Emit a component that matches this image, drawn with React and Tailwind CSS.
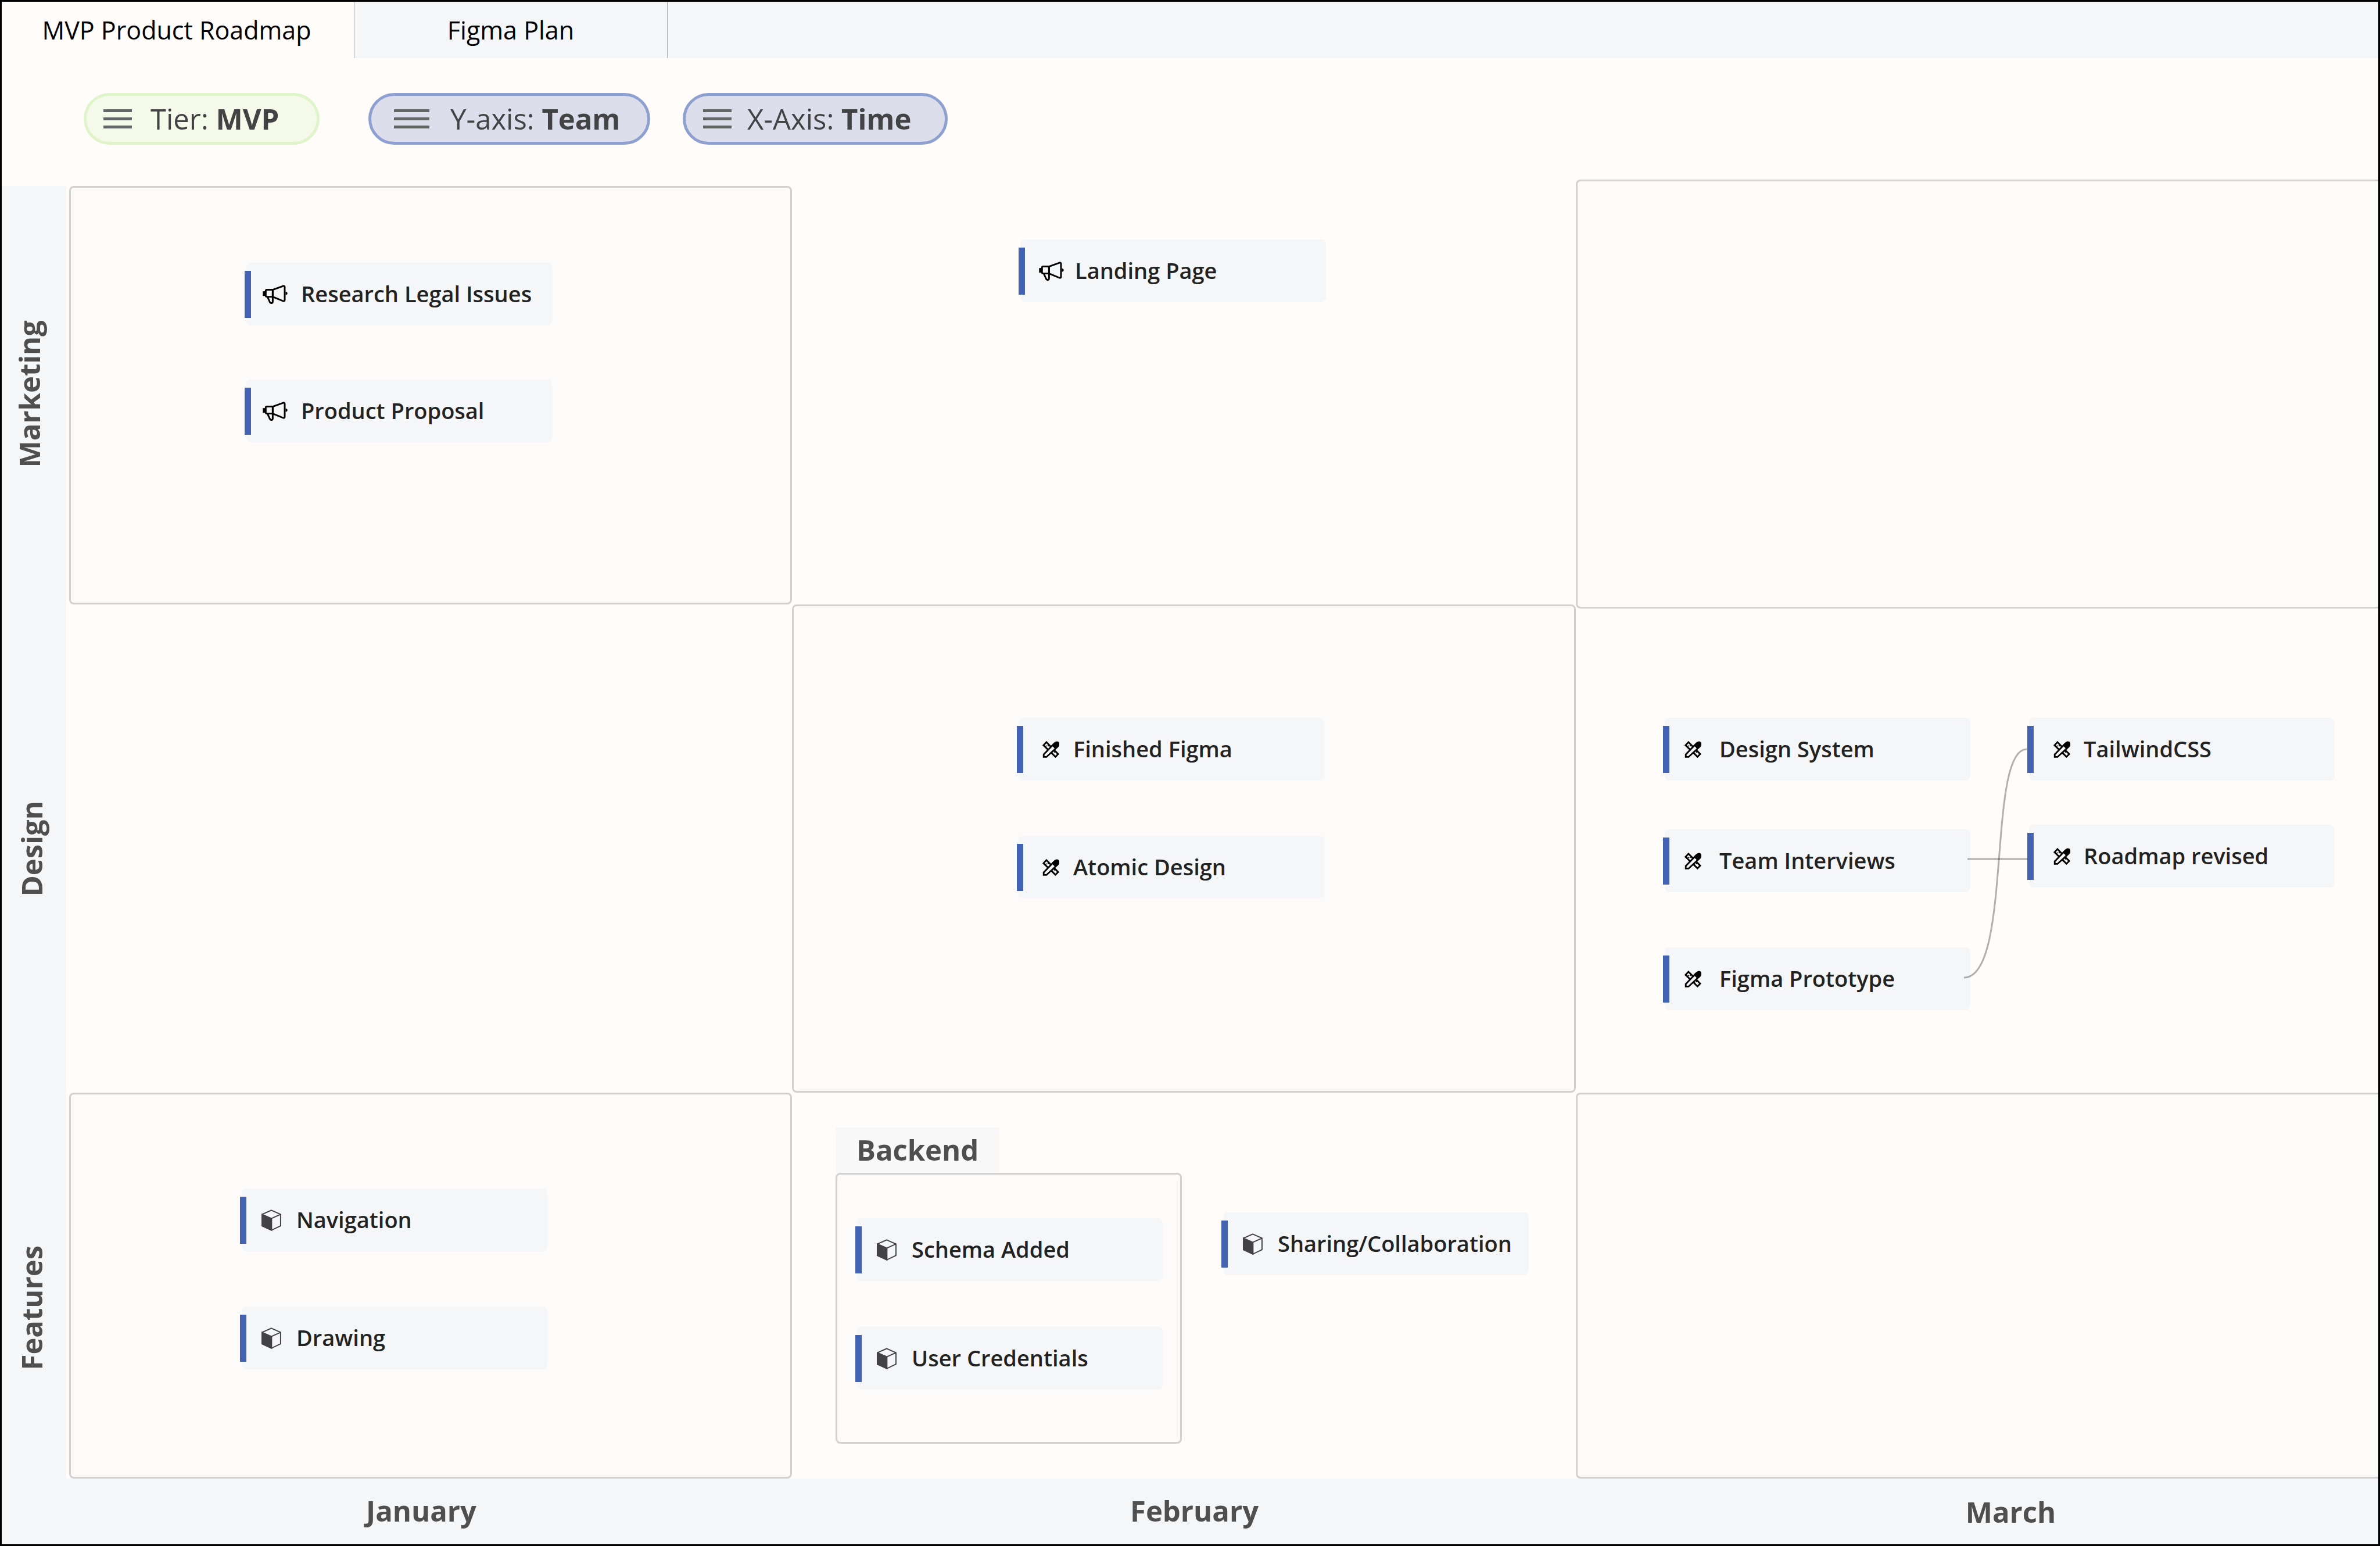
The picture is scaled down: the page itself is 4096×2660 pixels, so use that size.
import React from "react";

function MegaphoneIcon() {
  return (
    <svg viewBox="180 193 144 112" className="h-[33px] w-[43px] shrink-0" fill="none" stroke="#000" strokeWidth="10" strokeLinejoin="round" aria-hidden="true">
      <path d="M180 231h13v27h-13z" fill="#000" stroke="none" />
      <path d="M238 222h-34q-7 0-7 7v27q0 7 7 7h34z" />
      <path d="M238 222l61-22q9-2 9 6v75q0 9-9 7l-61-25z" />
      <path d="M208 265l13 29q3 6 9 6 8 0 8-9v-28" />
      <path d="M313 233q11 2 11 10t-11 10z" fill="#000" stroke="none" />
    </svg>
  );
}

function DesignIcon() {
  return (
    <svg viewBox="66 47 92 92" className="h-[29px] w-[29px] shrink-0" fill="#f5f6f8" stroke="#000" strokeWidth="9" aria-hidden="true">
      <path d="M88 53L152 118L137 133L72 70Z" />
      <path d="M103 67l-8 8M89 72l-4 4M137 101l-8 8M124 112l-4 4" strokeWidth="6" />
      <path d="M73 134v-14L130 61q9-9 18 0t0 18L88 134z" />
      <path d="M116 71l20 20 19-18q8-11-1-21-10-8-20 1z" fill="#000" stroke="none" />
      <path d="M82 127L127 82" stroke="#f5f6f8" strokeWidth="8" />
    </svg>
  );
}

function CubeIcon() {
  return (
    <svg viewBox="0 0 38 41" className="h-[37px] w-[34px] shrink-0" fill="none" stroke="#424244" strokeWidth="2.2" aria-hidden="true">
      <path d="M19 1.3L36.8 9.2V31.3L19 39.8L1.2 31.3V9.2Z" />
      <path d="M1.2 9.2L19.4 17.2V39.6L1.2 31.3Z" fill="#424244" />
      <path d="M19.4 17L36.8 9.2" />
    </svg>
  );
}

const ICONS = { megaphone: MegaphoneIcon, design: DesignIcon, cube: CubeIcon };

function Card({ icon, inset, className = "", children }) {
  const Icon = ICONS[icon];
  return (
    <article className={`relative flex h-[108px] w-[526px] shrink-0 items-center rounded-lg bg-[#f5f6f8] ${className}`}>
      <span className="absolute top-[14px] -left-[3px] h-[81px] w-[11px] bg-[#4462b2]" />
      <span className={`w-[94px] shrink-0 ${inset}`}>
        <Icon />
      </span>
      <h3 className="pb-0.5 text-[38px] leading-[52px] font-semibold whitespace-nowrap text-[#222]">{children}</h3>
    </article>
  );
}

function Pill({ label, value, className, burger = "w-[49px]" }) {
  return (
    <button type="button" className={`flex h-[89px] items-center rounded-full border-[5px] text-[49px] leading-[66px] whitespace-nowrap text-[#434345] ${className}`}>
      <span className={`flex shrink-0 flex-col gap-[9px] ${burger}`}>
        <span className="h-[5px] bg-[#646567]" />
        <span className="h-[5px] bg-[#646567]" />
        <span className="h-[5px] bg-[#646567]" />
      </span>
      <span>
        {label} <strong className="font-bold">{value}</strong>
      </span>
    </button>
  );
}

function Cell({ outlined, className = "", children }) {
  return (
    <section className={`border-[3px] ${outlined ? "rounded-lg border-[#d2d1cf] bg-[#fcfbf9]" : "border-transparent"} ${className}`}>
      {children}
    </section>
  );
}

function RowLabel({ className = "pr-2.5", children }) {
  return (
    <div className={`mr-[5px] flex items-center justify-center bg-[#f5f6f8] ${className}`}>
      <h2 className="rotate-180 text-[49px] leading-[66px] font-bold text-[#4f4f4f] [writing-mode:vertical-rl]">{children}</h2>
    </div>
  );
}

export default function App() {
  return (
    <div className="flex min-h-screen flex-col border-[3px] border-black bg-[#fffcf9] font-['Open_Sans',sans-serif]">
      <nav className="flex h-[97px] bg-[#f5f6f8] text-[43px] leading-[60px] text-black">
        <button type="button" className="w-[606px] bg-[#fffcf9] pr-1">MVP Product Roadmap</button>
        <button type="button" className="w-[540px] border-x border-[#a9aaac]">Figma Plan</button>
      </nav>

      <div className="flex h-[220px] items-center pb-[12px] pl-[141px]">
        <Pill label="Tier:" value="MVP" className="mr-[84px] min-w-[406px] gap-[32px] border-[#dff4ca] bg-[#f5f9e9] pl-[29px]" />
        <Pill label="Y-axis:" value="Team" burger="w-[61px]" className="mr-[56px] min-w-[485px] gap-[36px] border-[#8da0d0] bg-[#dddeeb] pl-[39px]" />
        <Pill label="X-Axis:" value="Time" className="min-w-[456px] gap-[27px] border-[#8da0d0] bg-[#dddeeb] pl-[30px]" />
      </div>

      <main className="grid flex-1 grid-cols-[116px_1244fr_1349fr_1381fr] grid-rows-[720fr_840fr_664fr]">
        <RowLabel className="pr-[18px] pb-1">Marketing</RowLabel>
        <Cell outlined className="flex flex-col gap-[93px] pt-[129px] pl-[302px]">
          <Card icon="megaphone" inset="pl-7">Research Legal Issues</Card>
          <Card icon="megaphone" inset="pl-7">Product Proposal</Card>
        </Cell>
        <Cell className="pt-[89px] pl-[390px]">
          <Card icon="megaphone" inset="pl-8">Landing Page</Card>
        </Cell>
        <Cell outlined className="-mt-[11px] -mb-[7px] rounded-r-none border-r-0" />

        <RowLabel>Design</RowLabel>
        <Cell />
        <Cell outlined className="flex flex-col gap-[95px] pt-[192px] pl-[387px]">
          <Card icon="design" inset="pl-[41px]">Finished Figma</Card>
          <Card icon="design" inset="pl-[41px]">Atomic Design</Card>
        </Cell>
        <Cell className="pt-[192px] pl-[150px]">
          <div className="relative flex gap-[101px]">
            <div className="flex flex-col">
              <Card icon="design" inset="pl-[34px]">Design System</Card>
              <Card icon="design" inset="pl-[34px]" className="mt-[84px]">Team Interviews</Card>
              <Card icon="design" inset="pl-[34px]" className="mt-[95px]">Figma Prototype</Card>
            </div>
            <div className="flex flex-col gap-[76px]">
              <Card icon="design" inset="pl-[42px]">TailwindCSS</Card>
              <Card icon="design" inset="pl-[42px]">Roadmap revised</Card>
            </div>
            <svg viewBox="0 0 112 503" className="absolute top-0 left-[514px] h-[503px] w-[112px]" fill="none" stroke="#000" strokeOpacity="0.3" strokeWidth="3" aria-hidden="true">
              <path d="M7 243H110" />
              <path d="M1 447C85 447 40 54 109 54" />
            </svg>
          </div>
        </Cell>

        <RowLabel className="pt-[76px] pr-2.5">Features</RowLabel>
        <Cell outlined className="flex flex-col gap-[95px] pt-[162px] pl-[294px]">
          <Card icon="cube" inset="pl-[34px]">Navigation</Card>
          <Card icon="cube" inset="pl-[34px]">Drawing</Card>
        </Cell>
        <Cell className="flex items-start gap-[71px] pt-[57px] pl-[72px]">
          <div className="flex flex-col items-start">
            <h3 className="bg-[#f8f8f8] px-[36px] pt-[5px] pb-[7px] text-[49px] leading-[66px] font-bold text-[#4f4f4f]">Backend</h3>
            <div className="flex flex-col gap-[79px] rounded-lg border-[3px] border-[#d2d1cf] bg-[#fcfbf9] pt-[75px] pr-[30px] pb-[90px] pl-[34px]">
              <Card icon="cube" inset="pl-[34px]">Schema Added</Card>
              <Card icon="cube" inset="pl-[34px]">User Credentials</Card>
            </div>
          </div>
          <Card icon="cube" inset="pl-[34px]" className="mt-[146px]">Sharing/Collaboration</Card>
        </Cell>
        <Cell outlined className="rounded-r-none border-r-0" />
      </main>

      <footer className="grid h-[113px] grid-cols-[116px_1244fr_1349fr_1381fr] items-center bg-[#f5f6f8] pb-1 text-center text-[49px] leading-[66px] font-bold text-[#4f4f4f]">
        <h2 className="col-start-2 pr-8">January</h2>
        <h2 className="pl-9">February</h2>
        <h2 className="pt-1 pl-[116px]">March</h2>
      </footer>
    </div>
  );
}
